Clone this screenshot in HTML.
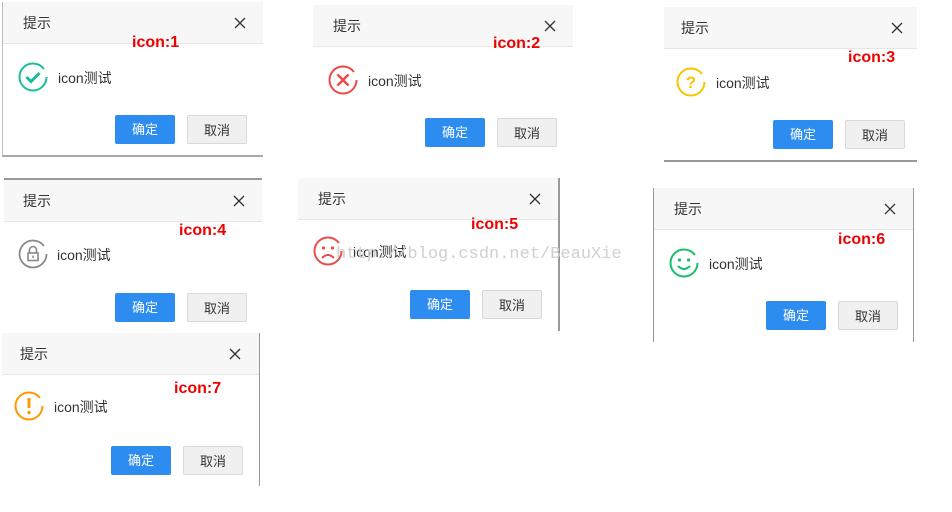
<!DOCTYPE html><html><head><meta charset="utf-8"><style>
body{margin:0;width:952px;height:512px;background:#fff;position:relative;overflow:hidden;font-family:"Liberation Sans","Noto Sans CJK SC",sans-serif}
.d{position:absolute;width:260px;height:155px;background:#fff}
.h{position:absolute;left:0;top:0;right:0;height:41px;background:#f7f7f7;border-bottom:1px solid #e6e6e6}
.t{position:absolute;left:20px;top:11px;font-size:14px;color:#333}
.x{position:absolute;left:229px;top:13px}
.ic{position:absolute;left:15px;top:60px;width:30px;height:30px}
.tx{position:absolute;left:55px;top:66px;font-size:14px;color:#333}
.b{position:absolute;top:113px;width:60px;height:29px;line-height:29px;text-align:center;font-size:13px;border-radius:2px;box-sizing:border-box}
.ok{left:112px;background:#2d8cf0;color:#fff}
.cn{left:184px;background:#f0f0f0;border:1px solid #d9d9d9;color:#333}
.lb{position:absolute;color:#e00;font-weight:bold;font-size:16px}
.wm{position:absolute;left:336px;top:245px;font-family:"Liberation Mono",monospace;font-size:17px;color:#d0d0d0;z-index:5;white-space:nowrap}
</style></head><body>

<div class="d" style="left:2px;top:2px;border-bottom:2px solid #aaa;border-left:1px solid #bbb;height:153px"><div class="h"></div><div class="t">提示</div>
<svg class="x" width="16" height="16" viewBox="0 0 16 16"><path d="M3 3L13 13M13 3L3 13" stroke="#333" stroke-width="1.3"/></svg>
<svg class="ic" viewBox="0 0 30 30"><circle cx="15" cy="15" r="13.5" fill="none" stroke="#19be9b" stroke-width="2" stroke-dasharray="76 9"/><path d="M8.5 15l4.5 4.5 8.5-8.5" fill="none" stroke="#19be9b" stroke-width="3"/></svg>
<div class="tx">icon测试</div><div class="b ok">确定</div><div class="b cn">取消</div></div>

<div class="d" style="left:313px;top:5px;height:151px"><div class="h"></div><div class="t">提示</div>
<svg class="x" width="16" height="16" viewBox="0 0 16 16"><path d="M3 3L13 13M13 3L3 13" stroke="#333" stroke-width="1.3"/></svg>
<svg class="ic" viewBox="0 0 30 30"><circle cx="15" cy="15" r="13.5" fill="none" stroke="#ed4b4b" stroke-width="2" stroke-dasharray="76 9"/><path d="M9.5 9.5l11 11M20.5 9.5l-11 11" stroke="#ed4b4b" stroke-width="2.5"/></svg>
<div class="tx">icon测试</div><div class="b ok">确定</div><div class="b cn">取消</div></div>

<div class="d" style="left:664px;top:7px;width:253px;height:153px;border-bottom:2px solid #999"><div class="h"></div><div class="t" style="left:17px">提示</div>
<svg class="x" style="left:225px" width="16" height="16" viewBox="0 0 16 16"><path d="M3 3L13 13M13 3L3 13" stroke="#333" stroke-width="1.3"/></svg>
<svg class="ic" style="left:12px" viewBox="0 0 30 30"><circle cx="15" cy="15" r="13.5" fill="none" stroke="#f7c600" stroke-width="2" stroke-dasharray="76 9"/><text x="15" y="21" text-anchor="middle" font-size="17" font-weight="bold" fill="#f7c600" font-family="Liberation Sans">?</text></svg>
<div class="tx" style="left:52px">icon测试</div><div class="b ok" style="left:109px">确定</div><div class="b cn" style="left:181px">取消</div></div>

<div class="d" style="left:4px;top:178px;width:258px;border-top:2px solid #999;height:150px"><div class="h"></div><div class="t" style="left:19px">提示</div>
<svg class="x" style="left:227px" width="16" height="16" viewBox="0 0 16 16"><path d="M3 3L13 13M13 3L3 13" stroke="#333" stroke-width="1.3"/></svg>
<svg class="ic" style="left:14px;top:59px" viewBox="0 0 30 30"><circle cx="15" cy="15" r="13.5" fill="none" stroke="#888" stroke-width="1.8" stroke-dasharray="76 9"/><path d="M11.5 14v-3a3.5 3.5 0 0 1 7 0v3" fill="none" stroke="#888" stroke-width="1.6"/><rect x="10" y="14" width="10" height="7.5" fill="none" stroke="#888" stroke-width="1.6"/><path d="M15 16.5v2.5" stroke="#888" stroke-width="1.5"/></svg>
<div class="tx" style="left:53px;top:65px">icon测试</div><div class="b ok" style="left:111px">确定</div><div class="b cn" style="left:183px">取消</div></div>

<div class="d" style="left:298px;top:178px;width:260px;border-right:2px solid #999;height:153px"><div class="h"></div><div class="t">提示</div>
<svg class="x" width="16" height="16" viewBox="0 0 16 16"><path d="M3 3L13 13M13 3L3 13" stroke="#333" stroke-width="1.3"/></svg>
<svg class="ic" style="top:58px" viewBox="0 0 30 30"><circle cx="15" cy="15" r="13.5" fill="none" stroke="#ed4b4b" stroke-width="2" stroke-dasharray="76 9"/><circle cx="10.5" cy="12" r="1.6" fill="#ed4b4b"/><circle cx="19.5" cy="12" r="1.6" fill="#ed4b4b"/><path d="M9 22q6-6 12 0" fill="none" stroke="#ed4b4b" stroke-width="2"/></svg>
<div class="tx" style="top:64px">icon测试</div><div class="b ok" style="top:112px">确定</div><div class="b cn" style="top:112px">取消</div></div>

<div class="d" style="left:653px;top:188px;width:259px;border-left:1px solid #999;border-right:1px solid #999;height:154px"><div class="h"></div><div class="t">提示</div>
<svg class="x" style="left:228px" width="16" height="16" viewBox="0 0 16 16"><path d="M3 3L13 13M13 3L3 13" stroke="#333" stroke-width="1.3"/></svg>
<svg class="ic" viewBox="0 0 30 30"><circle cx="15" cy="15" r="13.5" fill="none" stroke="#19be6b" stroke-width="2" stroke-dasharray="76 9"/><circle cx="10.5" cy="12" r="1.6" fill="#19be6b"/><circle cx="19.5" cy="12" r="1.6" fill="#19be6b"/><path d="M9 18q6 6 12 0" fill="none" stroke="#19be6b" stroke-width="2"/></svg>
<div class="tx">icon测试</div><div class="b ok">确定</div><div class="b cn">取消</div></div>

<div class="d" style="left:2px;top:333px;width:257px;border-right:1px solid #999;height:153px"><div class="h"></div><div class="t" style="left:18px">提示</div>
<svg class="x" style="left:225px" width="16" height="16" viewBox="0 0 16 16"><path d="M3 3L13 13M13 3L3 13" stroke="#333" stroke-width="1.3"/></svg>
<svg class="ic" style="left:12px;top:58px" viewBox="0 0 30 30"><circle cx="15" cy="15" r="13.5" fill="none" stroke="#ff9900" stroke-width="2" stroke-dasharray="76 9"/><path d="M15 7v10" stroke="#ff9900" stroke-width="3"/><circle cx="15" cy="21.5" r="1.7" fill="#ff9900"/></svg>
<div class="tx" style="left:52px;top:64px">icon测试</div><div class="b ok" style="left:109px">确定</div><div class="b cn" style="left:181px">取消</div></div>

<div class="wm">http://blog.csdn.net/BeauXie</div>

<div class="lb" style="left:132px;top:34px">icon:1</div>
<div class="lb" style="left:493px;top:35px">icon:2</div>
<div class="lb" style="left:848px;top:49px">icon:3</div>
<div class="lb" style="left:179px;top:222px">icon:4</div>
<div class="lb" style="left:471px;top:216px">icon:5</div>
<div class="lb" style="left:838px;top:231px">icon:6</div>
<div class="lb" style="left:174px;top:380px">icon:7</div>
</body></html>
